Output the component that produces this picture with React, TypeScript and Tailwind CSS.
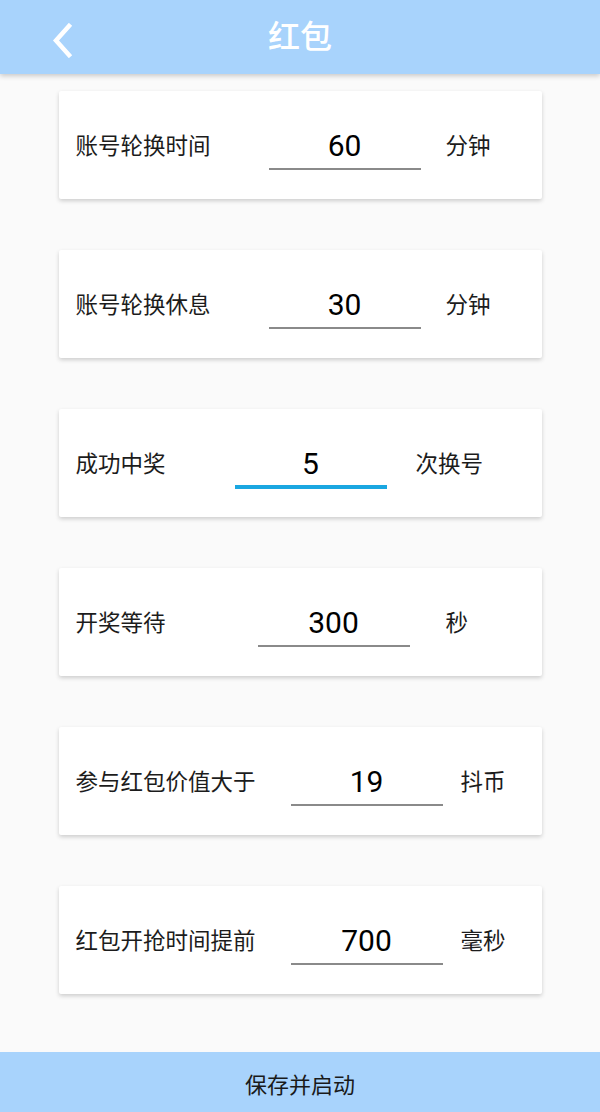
import type { ReactNode } from 'react';

type Row = {
  label: string;
  value: string;
  unit: string;
  labelWidth: string;
  unitGap: string;
  active?: boolean;
};

const rows: Row[] = [
  { label: '账号轮换时间', value: '60', unit: '分钟', labelWidth: 'w-[193px]', unitGap: 'ml-[25px]' },
  { label: '账号轮换休息', value: '30', unit: '分钟', labelWidth: 'w-[193px]', unitGap: 'ml-[25px]' },
  { label: '成功中奖', value: '5', unit: '次换号', labelWidth: 'w-[159px]', unitGap: 'ml-[29px]', active: true },
  { label: '开奖等待', value: '300', unit: '秒', labelWidth: 'w-[182px]', unitGap: 'ml-[36px]' },
  { label: '参与红包价值大于', value: '19', unit: '抖币', labelWidth: 'w-[215px]', unitGap: 'ml-[18px]' },
  { label: '红包开抢时间提前', value: '700', unit: '毫秒', labelWidth: 'w-[215px]', unitGap: 'ml-[18px]' },
];

export default function App() {
  return (
    <div className="flex h-[1112px] w-[600px] flex-col overflow-hidden bg-[#fafafa] font-['Roboto','Noto_Sans_CJK_SC',sans-serif] text-[#1c1c1c]">
      <header className="relative z-10 flex h-[74px] shrink-0 items-center justify-center bg-[#a8d3fc] shadow-[0_2px_5px_rgba(0,0,0,0.2)]">
        <button className="absolute left-[47px] top-[19px] p-1">
          <svg width="22" height="35" viewBox="0 0 22 35" fill="none">
            <path d="M18 3 L5 17.5 L18 32" stroke="white" strokeWidth="4.5" strokeLinecap="square" />
          </svg>
        </button>
        <h1 className="text-[32px] font-medium text-white">红包</h1>
      </header>

      <main className="flex flex-1 flex-col items-center gap-[51px] pt-[17px]">
        {rows.map((row) => (
          <Card key={row.label}>
            <span className={`${row.labelWidth} shrink-0 text-[22.5px] leading-[30px]`}>{row.label}</span>
            <div className="relative h-[40px] w-[152px] shrink-0">
              <div className="text-center text-[30px] leading-[40px] text-black">{row.value}</div>
              <div
                className={
                  row.active
                    ? 'absolute inset-x-0 top-[41px] h-[4px] bg-[#1aa7e1]'
                    : 'absolute inset-x-0 top-[42px] h-[2px] bg-[#8a8a8a]'
                }
              />
            </div>
            <span className={`${row.unitGap} shrink-0 text-[22.5px] leading-[30px]`}>{row.unit}</span>
          </Card>
        ))}
      </main>

      <button className="flex h-[60px] shrink-0 items-center justify-center bg-[#a8d3fc] pt-[6px] text-[22px] text-[#1a1a1a]">
        保存并启动
      </button>
    </div>
  );
}

function Card({ children }: { children: ReactNode }) {
  return (
    <div className="flex h-[108px] w-[483px] items-center rounded-[2px] bg-white pl-[17px] pt-[2px] shadow-[0_2px_4px_rgba(0,0,0,0.18)]">
      {children}
    </div>
  );
}
